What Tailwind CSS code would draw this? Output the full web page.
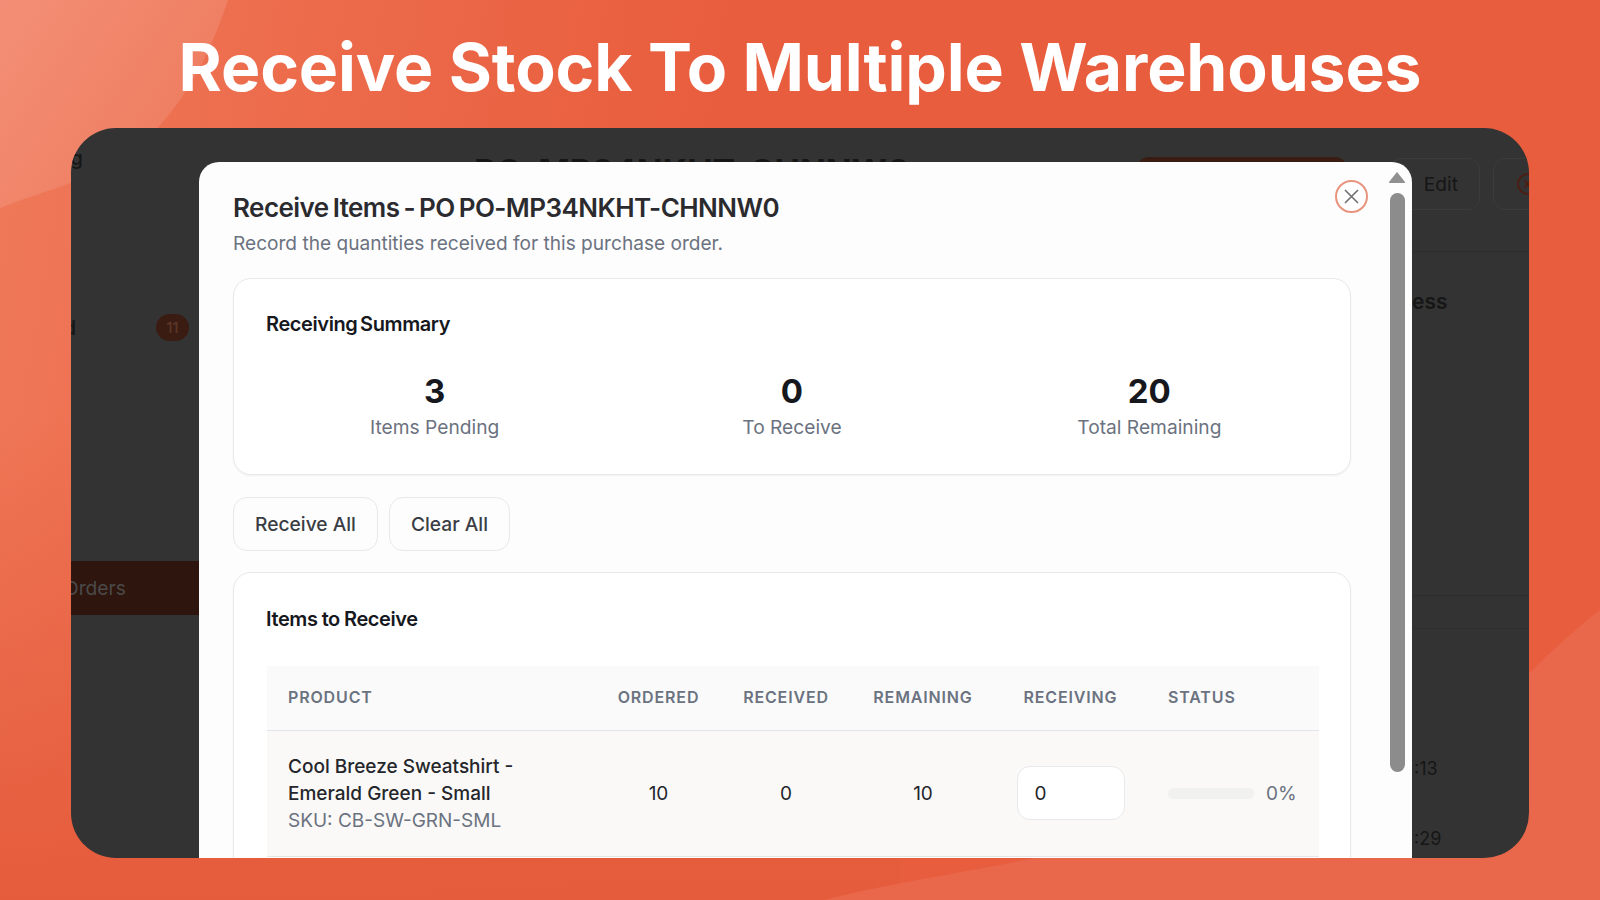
<!DOCTYPE html>
<html lang="en">
<head>
  <meta charset="UTF-8" />
  <title>Receive Stock To Multiple Warehouses</title>
  <script src="https://cdn.jsdelivr.net/npm/@tailwindcss/browser@4"></script>
</head>
<body class="font-['Inter',sans-serif]">
  <div class="relative w-[1600px] h-[900px] overflow-hidden bg-[linear-gradient(100deg,#ef7a5b_0%,#ec6b4b_18%,#e85d3d_42%,#e85d3d_100%)]">

    <!-- Background swooshes -->
    <svg class="absolute inset-0" width="1600" height="900" viewBox="0 0 1600 900">
      <defs>
        <linearGradient id="swoosh" x1="0" y1="0" x2="1" y2="0.6">
          <stop offset="0" stop-color="#f38f76" />
          <stop offset="1" stop-color="#ee7b5d" />
        </linearGradient>
        <linearGradient id="fadeLeft" x1="0" y1="0" x2="0" y2="1">
          <stop offset="0" stop-color="#e55c3c" stop-opacity="0" />
          <stop offset="1" stop-color="#e55c3c" />
        </linearGradient>
      </defs>
      <path d="M0 0H228C205 70 175 115 135 150C95 180 45 190 0 208Z" fill="url(#swoosh)" />
      <rect x="0" y="420" width="900" height="480" fill="url(#fadeLeft)" />
      <path d="M1600 610C1560 640 1500 700 1440 770C1360 830 1180 830 1024 860C950 875 880 885 825 900H1600Z" fill="#e9684b" />
    </svg>

    <!-- Title -->
    <div class="relative h-[128px] flex justify-center pt-[27px]">
      <h1 class="text-white text-[66px] leading-[80px] font-bold tracking-[-0.13px] whitespace-nowrap">Receive Stock To Multiple Warehouses</h1>
    </div>

    <!-- App screenshot, dimmed behind the modal -->
    <div class="relative mx-[71px] w-[1458px] h-[730px] rounded-[45px] overflow-hidden bg-[#333333] flex text-[#161616]">
      <aside class="w-[128px] shrink-0 flex flex-col">
        <div class="pt-[16px] h-[186px] text-[20px] font-medium leading-[28px]">
          <span class="block w-[12px] overflow-hidden whitespace-nowrap [direction:rtl]">g</span>
        </div>
        <div class="h-[247px] flex items-start pr-[10px] justify-between">
          <span class="text-[20px] leading-[28px] w-[5px] overflow-hidden whitespace-nowrap [direction:rtl] font-medium">d</span>
          <span class="w-[33px] h-[27px] rounded-full bg-[#3a1c12] text-[#5b3527] text-[14px] font-semibold flex items-center justify-center">11</span>
        </div>
        <div class="h-[54px] bg-[#2e150d] flex items-center text-[19.2px] text-[#4a4a4a]">
          <span class="-ml-[7px]">Orders</span>
        </div>
      </aside>

      <main class="flex-1 relative min-w-0">
        <div class="h-[124px] border-b border-[#2d2d2d] flex items-start pt-[24px] pl-[275px]">
          <span class="w-[435px] shrink-0 whitespace-nowrap text-[34px] leading-[40px] font-bold">PO-MP34NKHT-CHNNW0</span>
          <span class="ml-[228px] mt-[5px] shrink-0 w-[210px] h-[50px] rounded-[12px] bg-[#3a1c12]"></span>
          <span class="ml-[43px] mt-[6px] shrink-0 w-[90px] h-[52px] rounded-[12px] border border-[#3b3b3b] flex items-center justify-end pr-[21px] text-[19.2px]">Edit</span>
          <span class="ml-[13px] mt-[6px] shrink-0 w-[70px] h-[52px] rounded-[12px] border border-[#3b3b3b] flex items-center pl-[22px]">
            <svg class="w-[24px] h-[24px] shrink-0 text-[#4a1f14]" viewBox="0 0 24 24" fill="none" stroke="currentColor" stroke-width="2"><circle cx="12" cy="12" r="10" /><path d="M8.5 8.5l7 7M15.5 8.5l-7 7" /></svg>
          </span>
        </div>
        <div class="pl-[1213px] pt-[36px] h-[344px] text-[21px] font-semibold leading-[28px] border-b border-[#2d2d2d]">ess</div>
        <div class="h-[33px] border-b border-[#2f2f2f]"></div>
        <div class="pl-[1215px] pt-[128px] text-[18px] leading-[24px]">:13</div>
        <div class="pl-[1215px] pt-[46px] text-[18px] leading-[24px]">:29</div>
      </main>

      <!-- Modal -->
      <div class="absolute left-[128px] top-[34px] w-[1213px] h-[720px] rounded-t-[20px] bg-[#fdfdfd] pl-[34px] pr-[61px] pt-[31px]">
        <button class="absolute left-[1136px] top-[18px] w-[33px] h-[33px] rounded-full bg-white border-2 border-[#e8937d] flex items-center justify-center">
          <svg class="w-[17px] h-[17px]" viewBox="0 0 17 17" fill="none" stroke="#6f6f6f" stroke-width="1.6"><path d="M2 2l13 13M15 2L2 15" /></svg>
        </button>

        <!-- Scrollbar -->
        <div class="absolute left-[1190px] top-[9px] w-[16px] flex flex-col items-center">
          <svg class="w-[18px] h-[12px]" viewBox="0 0 18 12"><path d="M9 1L17 11Q17.500 12 16 12H2Q.5 12 1 11Z" fill="#909090" /></svg>
          <div class="mt-[10px] w-[15px] h-[579px] rounded-full bg-[#8c8c8c]"></div>
        </div>

        <h2 class="text-[26px] leading-[30px] font-semibold tracking-[-0.55px] [word-spacing:-2px] text-[#2b2b2f]">Receive Items - PO PO-MP34NKHT-CHNNW0</h2>
        <p class="mt-[7px] text-[19.1px] leading-[26px] text-[#6b7280]">Record the quantities received for this purchase order.</p>

        <section class="mt-[22px] h-[197px] rounded-[18px] border border-[#e8e9ec] bg-white shadow-[0_1px_2px_rgba(0,0,0,0.05)] px-[33px] pt-[33px]">
          <h3 class="-ml-[1px] text-[20px] leading-[24px] font-semibold tracking-[-0.4px] [word-spacing:-2px] text-[#16181d]">Receiving Summary</h3>
          <div class="mt-[35px] grid grid-cols-3 gap-[22px] text-center">
            <div>
              <div class="text-[33px] leading-[40px] font-bold text-[#16181d]">3</div>
              <div class="mt-[3px] text-[19.2px] leading-[27px] text-[#6b7280]">Items Pending</div>
            </div>
            <div>
              <div class="text-[33px] leading-[40px] font-bold text-[#16181d]">0</div>
              <div class="mt-[3px] text-[19.2px] leading-[27px] text-[#6b7280]">To Receive</div>
            </div>
            <div>
              <div class="text-[33px] leading-[40px] font-bold text-[#16181d]">20</div>
              <div class="mt-[3px] text-[19.2px] leading-[27px] text-[#6b7280]">Total Remaining</div>
            </div>
          </div>
        </section>

        <div class="mt-[22px] flex gap-[11px]">
          <button class="w-[145px] h-[54px] rounded-[14px] border border-[#e8e9ec] bg-[#fdfdfd] text-[19.2px] font-medium text-[#3a3d44]">Receive All</button>
          <button class="w-[121px] h-[54px] rounded-[14px] border border-[#e8e9ec] bg-[#fdfdfd] text-[19.2px] font-medium text-[#3a3d44]">Clear All</button>
        </div>

        <section class="mt-[21px] h-[400px] rounded-[18px] border border-[#e8e9ec] bg-white shadow-[0_1px_2px_rgba(0,0,0,0.05)] px-[33px] pt-[34px]">
          <h3 class="-ml-[1px] text-[20px] leading-[24px] font-semibold tracking-[-0.4px] [word-spacing:-0.5px] text-[#16181d]">Items to Receive</h3>
          <table class="mt-[35px] w-[1052px] table-fixed border-collapse">
            <colgroup>
              <col class="w-[329px]" /><col class="w-[125px]" /><col class="w-[130px]" /><col class="w-[144px]" /><col class="w-[151px]" /><col class="w-[173px]" />
            </colgroup>
            <thead class="bg-[#fafafa] text-[16px] font-semibold tracking-[0.85px] text-[#6b7280] uppercase">
              <tr class="h-[64px] border-b border-[#e3e5ea]">
                <th class="pl-[21px] pb-[2px] text-left font-semibold">Product</th>
                <th class="pb-[2px] font-semibold">Ordered</th>
                <th class="pb-[2px] font-semibold">Received</th>
                <th class="pb-[2px] font-semibold">Remaining</th>
                <th class="pb-[2px] font-semibold">Receiving</th>
                <th class="pl-[22px] pb-[2px] text-left font-semibold">Status</th>
              </tr>
            </thead>
            <tbody class="bg-[#faf9f7] text-[19px] leading-[27px] font-medium text-[#24262b]">
              <tr class="border-b border-[#e3e5ea]">
                <td class="pl-[21px] py-[22px]">
                  <div class="w-[240px]">Cool Breeze Sweatshirt - Emerald Green - Small</div>
                  <div class="font-normal text-[#6b7280]">SKU: CB-SW-GRN-SML</div>
                </td>
                <td class="text-center font-normal">10</td>
                <td class="text-center font-normal">0</td>
                <td class="text-center font-normal">10</td>
                <td class="text-center">
                  <div class="mx-auto w-[108px] h-[54px] rounded-[13px] border border-[#e8e9ec] bg-white flex items-center pl-[17px] font-normal">0</div>
                </td>
                <td class="pl-[22px]">
                  <div class="flex items-center gap-[12px]">
                    <div class="w-[86px] h-[11px] rounded-full bg-[#f1f1ef]"></div>
                    <span class="font-normal text-[#6b7280]">0%</span>
                  </div>
                </td>
              </tr>
            </tbody>
          </table>
        </section>
      </div>
    </div>
  </div>
</body>
</html>
